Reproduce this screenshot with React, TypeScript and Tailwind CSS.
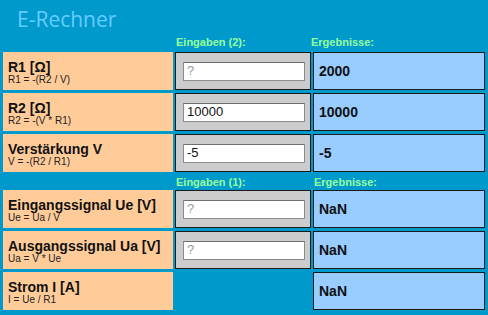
import React from "react";

const arial = { fontFamily: '"Liberation Sans", Arial, sans-serif' };

function Label({ title, sub }: { title: string; sub: string }) {
  return (
    <div className="h-[38px] bg-[#ffcc99] pl-[5px] pt-[8px] flex flex-col text-[#111]">
      <div className="text-[14px] font-bold leading-[15px]">{title}</div>
      <div className="text-[10px] leading-[10px] text-[#222]">{sub}</div>
    </div>
  );
}

function InputCell({ value }: { value?: string }) {
  return (
    <div className="h-[38px] bg-[#cccccc] border border-[#1a1a1a] flex items-center pl-[7px]">
      <input
        readOnly
        value={value ?? ""}
        placeholder="?"
        className="w-[122px] h-[19px] bg-white border border-[#8c8c8c] border-t-[#6f6f6f] px-[3px] text-[13px] text-[#111] placeholder:text-[#9a9a9a] outline-none"
        style={arial}
      />
    </div>
  );
}

function Result({ value }: { value: string }) {
  return (
    <div className="h-[38px] bg-[#99ccff] border border-[#1a1a1a] flex items-center pl-[5px] text-[14px] font-bold text-[#111]">
      {value}
    </div>
  );
}

function Header({ first }: { first: boolean }) {
  return (
    <>
      <div />
      <div className={`${first ? "h-[14px]" : "h-[12px]"} pl-[1px] text-[11px] font-bold leading-[14px] text-[#99ff99]`}>
        {first ? "Eingaben (2):" : "Eingaben (1):"}
      </div>
      <div className={`${first ? "h-[14px] -ml-[2px]" : "h-[12px] ml-[1px]"} text-[11px] font-bold leading-[14px] text-[#99ff99]`}>
        Ergebnisse:
      </div>
    </>
  );
}

export default function App() {
  return (
    <div className="w-[488px] h-[315px] bg-[#0099cc] overflow-hidden" style={arial}>
      <div
        className="h-[35px] pt-[5px] pl-[17px] text-[21px] leading-[28px] text-[#66ccff]"
        style={{ fontFamily: '"Open Sans", sans-serif' }}
      >
        E-Rechner
      </div>
      <div className="grid grid-cols-[170px_136px_172px] gap-x-[2px] gap-y-[3px] pl-[3px]">
        <Header first={true} />
        <Label title="R1 [Ω]" sub="R1 = -(R2 / V)" />
        <InputCell />
        <Result value="2000" />
        <Label title="R2 [Ω]" sub="R2 = -(V * R1)" />
        <InputCell value="10000" />
        <Result value="10000" />
        <Label title="Verstärkung V" sub="V = -(R2 / R1)" />
        <InputCell value="-5" />
        <Result value="-5" />
        <Header first={false} />
        <Label title="Eingangssignal Ue [V]" sub="Ue = Ua / V" />
        <InputCell />
        <Result value="NaN" />
        <Label title="Ausgangssignal Ua [V]" sub="Ua = V * Ue" />
        <InputCell />
        <Result value="NaN" />
        <Label title="Strom I [A]" sub="I = Ue / R1" />
        <div />
        <Result value="NaN" />
      </div>
    </div>
  );
}
